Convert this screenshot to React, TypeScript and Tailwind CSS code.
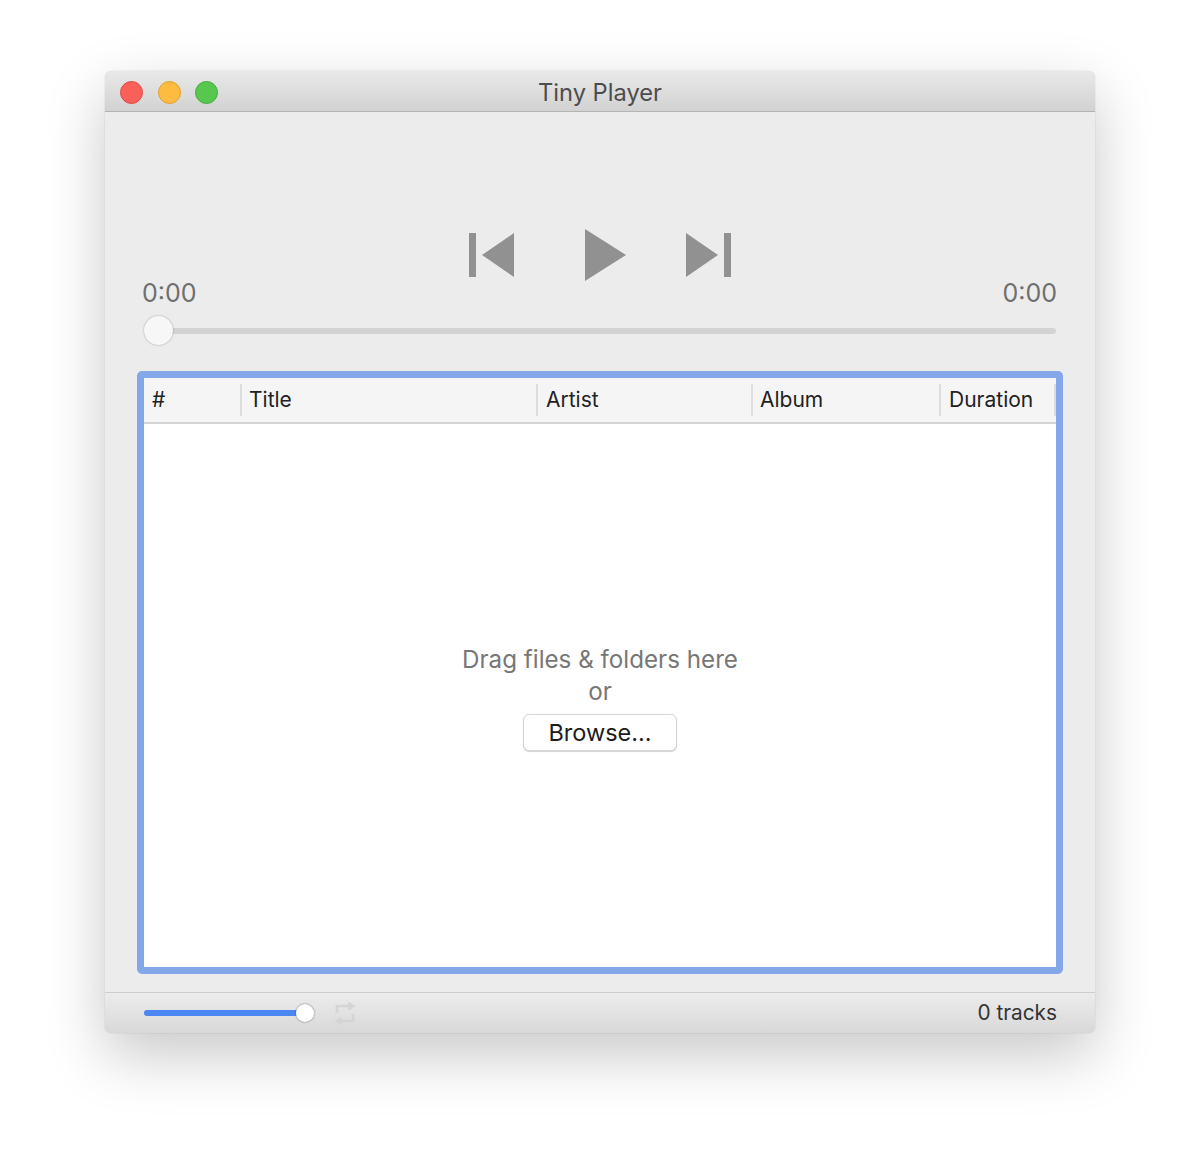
export default function App() {
  const columns = [
    { label: "#", width: "w-[98px]", pad: "pl-2" },
    { label: "Title", width: "w-[296px]", pad: "pl-[7px]" },
    { label: "Artist", width: "w-[215px]", pad: "pl-2" },
    { label: "Album", width: "w-[188px]", pad: "pl-[7px]" },
    { label: "Duration", width: "w-[115px]", pad: "pl-2" },
  ];

  return (
    <div className="w-[1200px] h-[1172px] bg-white flex justify-center pt-[71px] font-['Inter','Liberation_Sans',sans-serif]">
      <div className="w-[990px] h-[962px] flex flex-col rounded-[7px] overflow-hidden bg-[#ececec] shadow-[0_22px_60px_rgba(0,0,0,0.22),0_0_1px_rgba(0,0,0,0.35)]">
        {/* Title bar */}
        <div className="relative h-[41px] shrink-0 flex items-center justify-center bg-gradient-to-b from-[#e9e9e9] to-[#d2d2d2] border-b border-[#b4b4b4]">
          <div className="absolute left-[15px] top-[10px] flex gap-[14.5px]">
            <span className="w-[23px] h-[23px] rounded-full bg-[#f9605a] border border-[#df4a43]" />
            <span className="w-[23px] h-[23px] rounded-full bg-[#fdbc40] border border-[#e0a030]" />
            <span className="w-[23px] h-[23px] rounded-full bg-[#57c84d] border border-[#45ad3c]" />
          </div>
          <span className="text-[23.7px] leading-none pt-[3px] text-[#4d4d4d]">Tiny Player</span>
        </div>

        {/* Player */}
        <div className="flex-1 flex flex-col px-[32px] min-h-0">
          <div className="h-[170px] shrink-0 flex justify-center items-start pt-[121px] pl-px fill-[#919191]">
            <svg width="46" height="44" viewBox="0 0 46 44" className="shrink-0 mr-[70px]">
              <rect x="0" y="0" width="7" height="44" />
              <path d="M45 0V44L13 22Z" />
            </svg>
            <svg width="42" height="52" viewBox="0 0 42 52" className="shrink-0 mr-[59px] -mt-1">
              <path d="M0 0V52L41 26Z" />
            </svg>
            <svg width="46" height="44" viewBox="0 0 46 44" className="shrink-0">
              <path d="M0 0V44L32 22Z" />
              <rect x="38" y="0" width="7" height="44" />
            </svg>
          </div>
          <div className="flex justify-between -mt-[1px] mx-[5px] text-[25px] leading-none text-[#6f6f6f] h-[26px]">
            <span>0:00</span>
            <span className="mr-px">0:00</span>
          </div>
          <div className="relative h-[29px] mt-[9px] ml-[7px] mr-[7px] flex items-center shrink-0">
            <div className="w-full h-[6px] rounded-full bg-[#d3d3d3]" />
            <div className="absolute left-0 top-0 w-[29px] h-[29px] rounded-full bg-[#f7f7f7] shadow-[0_0_2px_rgba(0,0,0,0.35)]" />
          </div>

          {/* Track table */}
          <div className="mt-[26px] h-[603px] shrink-0 flex flex-col border-[7px] border-[#84a7ea] rounded-[5px] bg-white">
            <div className="h-[46px] shrink-0 flex items-center bg-[#f5f5f6] border-b-2 border-[#d4d4d4]">
              {columns.map((col) => (
                <div
                  key={col.label}
                  className={`${col.width} ${col.pad} h-[32px] flex items-center shrink-0 border-r-2 border-[#dedede] text-[21px] text-[#222222]`}
                >
                  {col.label}
                </div>
              ))}
            </div>
            <div className="flex-1 flex flex-col items-center pt-[220px]">
              <p className="text-[24.2px] leading-[32px] text-[#777777]">Drag files &amp; folders here</p>
              <p className="text-[24.2px] leading-[32px] text-[#777777]">or</p>
              <button className="mt-[6px] w-[154px] h-[37px] flex items-center justify-center rounded-[6px] bg-white border border-[#d5d5d5] shadow-[0_1px_1px_rgba(0,0,0,0.18)] text-[23.5px] leading-none text-[#1c1c1c]">
                Browse...
              </button>
            </div>
          </div>
        </div>

        {/* Footer */}
        <div className="h-[41px] shrink-0 flex items-center justify-between pl-[39px] pr-[38px] bg-gradient-to-b from-[#ececec] to-[#d8d8d8] border-t border-[#cdcdcd]">
          <div className="flex items-center">
            <div className="relative w-[170px] h-[20px] flex items-center">
              <div className="w-[155px] h-[6px] rounded-full bg-[#4c86f3]" />
              <div className="absolute left-[152px] top-px w-[18px] h-[18px] rounded-full bg-white shadow-[0_0_2px_rgba(0,0,0,0.55)]" />
            </div>
            <svg width="24" height="25" viewBox="0 0 24 25" fill="none" stroke="#d4d4d4" strokeWidth="2.6" className="ml-[19px]">
              <path d="M4 12V5H17" />
              <path d="M15.3 0.7L22.7 5L15.3 9.7Z" fill="#d4d4d4" stroke="none" />
              <path d="M20 13V20H7" />
              <path d="M1.3 20L8.7 15.7V24.3Z" fill="#d4d4d4" stroke="none" />
            </svg>
          </div>
          <span className="text-[20.8px] leading-none text-[#333333]">0 tracks</span>
        </div>
      </div>
    </div>
  );
}
